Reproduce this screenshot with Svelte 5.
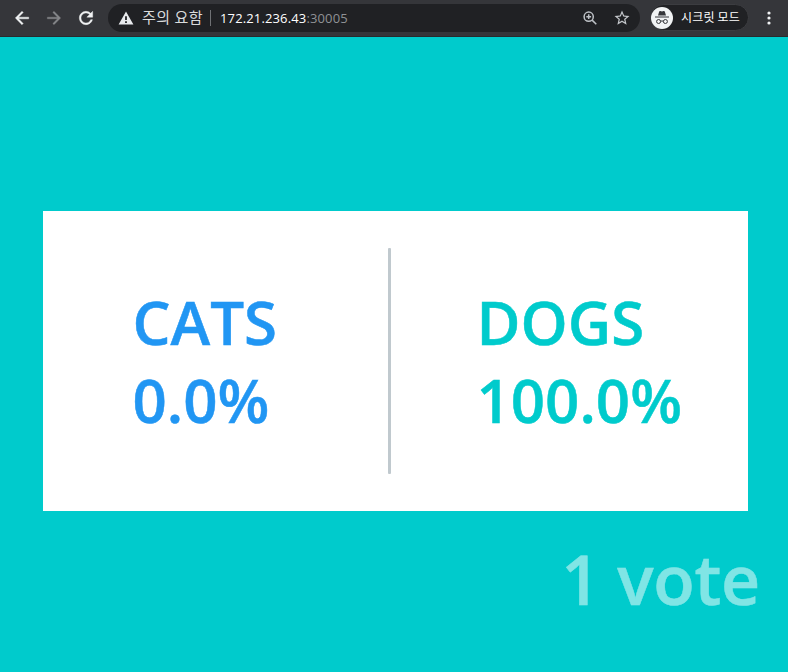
<script>
  const options = [
    { name: 'CATS', percent: '0.0%', tone: 'cats' },
    { name: 'DOGS', percent: '100.0%', tone: 'dogs' }
  ];
</script>

<div class="window">
  <header class="toolbar">
    <svg class="icon back" viewBox="0 0 24 24"><path fill="#f1f3f4" stroke="#f1f3f4" stroke-width=".5" d="M20 11H7.83l5.59-5.59L12 4l-8 8 8 8 1.41-1.41L7.83 13H20v-2z" /></svg>
    <svg class="icon forward" viewBox="0 0 24 24"><path fill="#85878a" stroke="#85878a" stroke-width=".4" d="M12 4l-1.41 1.41L16.17 11H4v2h12.17l-5.58 5.59L12 20l8-8z" /></svg>
    <svg class="icon reload" viewBox="0 0 24 24"><path fill="#f1f3f4" stroke="#f1f3f4" stroke-width=".5" d="M17.65 6.35C16.2 4.9 14.21 4 12 4c-4.42 0-7.99 3.58-7.99 8s3.57 8 7.99 8c3.73 0 6.84-2.55 7.73-6h-2.08c-.82 2.33-3.04 4-5.65 4-3.31 0-6-2.69-6-6s2.69-6 6-6c1.66 0 3.14.69 4.22 1.78L13 11h7V4l-2.35 2.35z" /></svg>
    <div class="address">
      <svg class="warning" viewBox="0 0 16 14"><path fill="#e8eaed" fill-rule="evenodd" d="M8 .5 15.4 13.5H.6zM7.1 5.3v3.8h1.8V5.3zM7.1 10.3v1.8h1.8v-1.8z" /></svg>
      <span class="security">주의 요함</span>
      <span class="separator"></span>
      <span class="url">172.21.236.43<span class="port">:30005</span></span>
      <svg class="zoom" viewBox="0 0 16 16" fill="none" stroke="#bdc1c6" stroke-width="1.5"><circle cx="6.7" cy="6.7" r="4.6" /><path d="M10.1 10.1 14.3 14.3M4.3 6.7h4.8M6.7 4.3v4.8" /></svg>
      <svg class="star" viewBox="0 0 24 24"><path fill="#c5c8cc" d="M22 9.24l-7.19-.62L12 2 9.19 8.63 2 9.24l5.46 4.73L5.82 21 12 17.27 18.18 21l-1.63-7.03L22 9.24zM12 15.4l-3.76 2.27 1-4.28-3.32-2.88 4.38-.38L12 6.1l1.71 4.04 4.38.38-3.32 2.88 1 4.28L12 15.4z" /></svg>
    </div>
    <div class="incognito">
      <svg viewBox="0 0 22 22"><circle cx="11" cy="11" r="11" fill="#f1f3f4" /><path fill="#35363a" d="M7 8.4 8.2 4.6c.2-.6.7-.7 1.2-.5l1.6.5 1.6-.5c.5-.2 1 0 1.2.5L15 8.4zM4 9.4h14v1.1H4z" /><g fill="none" stroke="#35363a" stroke-width="1"><circle cx="7.6" cy="14.5" r="2" /><circle cx="14.4" cy="14.5" r="2" /><path d="M9.6 14.3q1.4-.8 2.8 0" /></g></svg>
      <span>시크릿 모드</span>
    </div>
    <svg class="menu" viewBox="0 0 4 14" fill="#f1f3f4"><circle cx="2" cy="2" r="1.6" /><circle cx="2" cy="7" r="1.6" /><circle cx="2" cy="12" r="1.6" /></svg>
  </header>
  <main>
    <section class="card">
      {#each options as option, i}
        {#if i > 0}<div class="divider"></div>{/if}
        <div class="choice {option.tone}">
          <div>{option.name}</div>
          <div>{option.percent}</div>
        </div>
      {/each}
    </section>
    <div class="result">1 vote</div>
  </main>
</div>

<style>
  .window { width: 788px; height: 672px; display: flex; flex-direction: column; overflow: hidden; background: #00cbcc; font-family: "Open Sans", "Noto Sans CJK KR", sans-serif; }
  svg { display: block; flex: none; }
  .toolbar { box-sizing: border-box; height: 37px; flex: none; display: flex; align-items: center; padding-bottom: 1px; background: #35363a; border-bottom: 1px solid #292a2d; white-space: nowrap; }
  .icon { width: 20px; height: 20px; }
  .back { margin-left: 12px; }
  .forward, .reload { margin-left: 12px; }
  .address { box-sizing: border-box; margin-left: 12px; width: 532px; height: 28px; border-radius: 14px; background: #202124; display: flex; align-items: center; padding-left: 10px; flex: none; }
  .warning { width: 16px; height: 14px; }
  .security { width: 68px; margin-left: 8px; padding-bottom: 2px; color: #f1f3f4; font: 300 15px/20px "Noto Sans CJK KR", sans-serif; letter-spacing: 0.5px; -webkit-text-stroke: 0.2px; flex: none; }
  .separator { width: 1px; height: 16px; background: #6f7174; }
  .url { margin-left: 9px; width: 362px; color: #fff; font-size: 13px; line-height: 20px; letter-spacing: 0.14px; }
  .port { color: #8f9195; }
  .zoom { width: 16px; height: 16px; }
  .star { width: 18px; height: 18px; margin-left: 15px; }
  .incognito { box-sizing: border-box; margin-left: 10px; width: 99px; height: 27px; border-radius: 14px; background: #202124; border: 1px solid #3c3d41; display: flex; align-items: center; gap: 8px; color: #fff; font: 12px/18px "Noto Sans CJK KR", sans-serif; letter-spacing: 0.2px; flex: none; }
  .incognito span { padding-bottom: 1px; }
  .incognito svg { width: 22px; height: 22px; }
  .menu { width: 4px; height: 14px; margin-left: 18px; }
  main { flex: 1; display: flex; flex-direction: column; padding: 174px 40px 0 43px; }
  .card { box-sizing: border-box; width: 705px; height: 300px; background: #fff; display: flex; align-items: center; padding-left: 89.5px; }
  .choice { font-size: 60px; font-weight: 600; line-height: 78px; white-space: nowrap; -webkit-text-stroke: 0.5px; }
  .cats { width: 255.5px; color: #2196f3; }
  .dogs { margin-left: 85.5px; color: #00cbcc; }
  .divider { width: 3px; height: 226px; border-radius: 1px; background: #c0c9ce; }
  .result { align-self: flex-end; margin: 23px -12px 0 0; color: #fff; opacity: 0.5; font-size: 68px; font-weight: 600; line-height: 90px; letter-spacing: -0.3px; -webkit-text-stroke: 0.5px; }
</style>
